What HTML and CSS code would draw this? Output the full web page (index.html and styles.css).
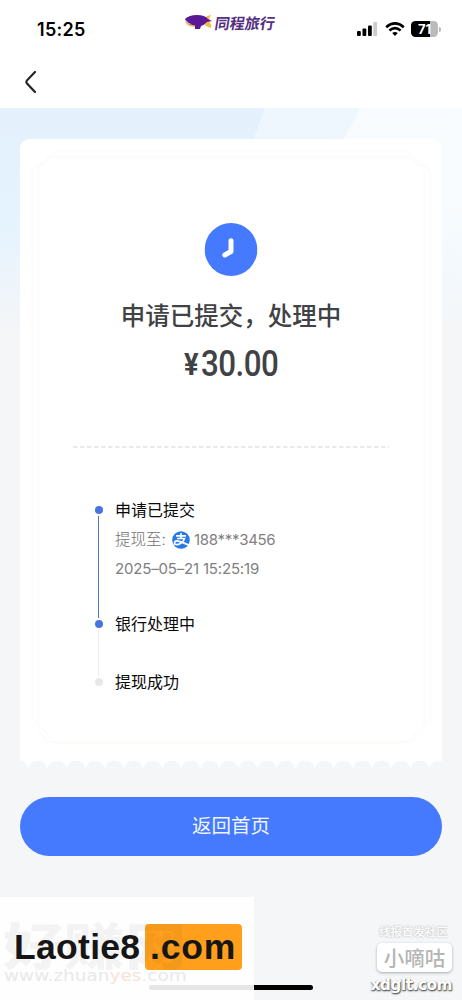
FILE: index.html
```html
<!DOCTYPE html>
<html lang="zh-CN">
<head>
<meta charset="utf-8">
<meta name="viewport" content="width=device-width, initial-scale=1">
<title>提现</title>
<link rel="stylesheet" href="styles.css">
</head>
<body>
<header class="status">
  <span class="time">15:25</span>
  <span class="brand">
    <svg width="29" height="18" viewBox="0 0 29 18"><path d="M19 5 Q24 1 27 1 Q25 4 25 7 Q28 11 27 14 Q22 13 19 9Z" fill="#f3bd45"/><path d="M1 5 Q1 13 10 13 L18 13 L14 11 Q5 11 2 5Z" fill="#f2c565"/><path d="M1 5 Q5 1 13 1 Q21 1 24 5 L28 7 L23 8 Q20 11 17 12 L16 15 H11 V11.5 Q4 11 3 8 L1 5Z" fill="#5a1897"/><path d="M2 6 Q4 9.5 8 10.5 Q4 10.8 2 6Z" fill="#fff"/></svg>
    <span class="brand-name">同程旅行</span>
  </span>
  <span class="signals">
    <svg width="21" height="14" viewBox="0 0 21 14"><rect x="0" y="9" width="3.8" height="5" rx="1"/><rect x="5.5" y="6.5" width="3.8" height="7.5" rx="1"/><rect x="11" y="3.5" width="3.8" height="10.5" rx="1"/><rect x="16.3" y="0" width="3.8" height="14" rx="1" fill="#ccc"/></svg>
    <svg width="20" height="14" viewBox="0 0 20 14"><g fill="none" stroke="#000" stroke-width="2.6"><path d="M1.2 5.2 Q10 -2.4 18.8 5.2"/><path d="M4.4 8.5 Q10 3.8 15.6 8.5"/></g><path d="M7.2 11 Q10 8.8 12.8 11 L10 14Z"/></svg>
    <span class="battery">71</span>
  </span>
</header>
<nav class="nav">
  <svg width="14" height="24" viewBox="0 0 14 24"><path d="M11 2 L2.8 10.6 Q1.8 12 2.8 13.2 L11 22" fill="none" stroke="#222" stroke-width="2.2" stroke-linecap="round"/></svg>
</nav>
<main class="page">
  <svg class="rays" width="462" height="230" viewBox="0 0 462 230">
    <defs><linearGradient id="fade" x1="0" y1="0" x2="0" y2="1"><stop offset=".4" stop-color="#fff"/><stop offset="1" stop-color="#fff" stop-opacity="0"/></linearGradient></defs>
    <path d="M265 0H462V230H180Z" fill="url(#fade)" opacity=".38"/><path d="M360 0H462V230H240Z" fill="url(#fade)" opacity=".6"/>
  </svg>
  <section class="card">
    <svg class="frame" width="422" height="627" viewBox="0 0 422 627" fill="none" stroke="#faf9f6"><path d="M36 12H386L410 32V579L386 604H36L12 579V32Z"/><path d="M32 18H390Q393 24 404 28V591Q398 596 392 603H26Q24 596 18 592V28Q28 24 32 18Z"/></svg>
    <svg class="clock" width="53" height="53" viewBox="0 0 53 53"><circle cx="26.5" cy="26.5" r="26.4" fill="#4579fe"/><path d="M26.5 17.8V28.5L20.3 32" fill="none" stroke="#fff" stroke-width="5" stroke-linecap="round" stroke-linejoin="round"/></svg>
    <h1 class="title">申请已提交，处理中</h1>
    <p class="amount"><span class="yen">¥</span><span class="sum">30.00</span></p>
    <svg class="divider" width="316" height="2" viewBox="0 0 316 2"><path d="M0 1H316" stroke="#e4e4e4" stroke-width="1.4" stroke-dasharray="4.5 2.5"/></svg>
    <ol class="steps">
      <li class="step done">
        <span class="rail"></span>
        <div class="info">
          <h2>申请已提交</h2>
          <p class="account"><span class="to">提现至:</span><svg width="18" height="18" viewBox="0 0 18 18"><circle cx="9" cy="9" r="8.8" fill="#2878e6"/><g fill="none" stroke="#fff" stroke-width="1.7"><path d="M4 4.8H14M9 2.2V7.5M5 7.5H12.5Q11 12.2 5.5 13.6Q2.3 14 2.5 11.7Q3 9.4 6.3 10.1Q9 10.7 17 14.1"/></g></svg><span class="phone">188***3456</span></p>
          <p class="date">2025–05–21 15:25:19</p>
        </div>
      </li>
      <li class="step current">
        <span class="rail"></span>
        <h2>银行处理中</h2>
      </li>
      <li class="step pending">
        <span class="rail"></span>
        <h2>提现成功</h2>
      </li>
    </ol>
    <div class="scallops"></div>
  </section>
  <button class="home">返回首页</button>
</main>
<div class="indicator"></div>
<aside class="mark-left">
  <div class="logo"><span>Laotie8</span><b>.com</b></div>
  <span class="ghost">好赚网</span>
  <span class="ghost-url">www.zhuan<i>yes</i>.com</span>
</aside>
<aside class="mark-right">
  <span class="club">线报首发社区</span>
  <span class="badge">小嘀咕</span>
  <span class="site">xdglt.com</span>
</aside>
</body>
</html>
```
FILE: styles.css
```css
* { box-sizing: border-box; }
body {
  margin: 0;
  height: 1000px;
  position: relative;
  overflow: hidden;
  display: flex;
  flex-direction: column;
  background: #f4f6f9;
  font-family: Inter, "Noto Sans CJK SC", sans-serif;
}
h1, h2, p, ol { margin: 0; padding: 0; font-weight: 400; }
svg { display: block; flex: none; }

.status {
  height: 58px;
  background: #fff;
  display: grid;
  grid-template-columns: 184px 1fr 105px;
  align-items: start;
}
.time { padding: 18px 0 0 37px; font-size: 18px; line-height: 24px; font-weight: 600; letter-spacing: .3px; }
.brand { display: flex; padding-top: 14px; gap: 2px; }
.brand-name {
  font: 700 15px/18px "Noto Sans CJK SC", sans-serif;
  color: #553080;
  transform: skewX(-9deg);
  white-space: nowrap;
}
.signals { display: flex; align-items: center; padding-top: 21px; gap: 7px; }
.battery {
  position: relative;
  width: 27px;
  height: 16px;
  margin-left: -1px;
  border-radius: 4.5px;
  background: linear-gradient(90deg, #000 72%, #bbb 72%);
  color: #fff;
  font-size: 13px;
  line-height: 16px;
  font-weight: 700;
  text-align: center;
}
.battery::after {
  content: "";
  position: absolute;
  left: 28px;
  top: 6px;
  width: 1.5px;
  height: 5px;
  border-radius: 0 2px 2px 0;
  background: #bbb;
}
.nav { height: 50px; background: #fff; padding: 12px 0 0 24px; }

.page {
  flex: 1;
  position: relative;
  padding: 31px 20px 0;
  background: linear-gradient(180deg, #e4f1fd 0, #e4f3fe 110px, #f4f6f8 220px);
}
.rays { position: absolute; left: 0; top: 0; }
.card {
  position: relative;
  height: 629px;
  border-radius: 9px 9px 0 0;
  background: linear-gradient(#fff, #fff) 0 0 / 100% 622px no-repeat;
  display: flex;
  flex-direction: column;
  align-items: center;
}
.frame { position: absolute; left: 0; top: 0; }
.clock { margin-top: 84px; transform: translateX(-.5px); }
.title {
  margin-top: 21px;
  font: 500 24.5px/36px "Noto Sans CJK SC", sans-serif;
  color: #414245;
  white-space: nowrap;
}
.amount {
  width: 96px;
  height: 40px;
  margin-top: 11px;
  display: flex;
  font: 500 36px/40px Roboto, sans-serif;
  color: #414245;
}
.yen { width: 20px; font-size: 32px; font-weight: 700; transform: translateX(1px) scaleX(.85); transform-origin: left; }
.sum { transform: scaleX(.87); transform-origin: left; letter-spacing: -.6px; }
.sum { margin-left: 1px; }
.divider { margin-top: 62px; }

.steps { list-style: none; align-self: stretch; padding: 48.5px 0 0 74px; }
.step { display: flex; gap: 12px; }
.step h2 { font: 400 16px/24px "Noto Sans CJK SC", sans-serif; color: #0a0a0a; }
.rail {
  width: 9px;
  padding-top: 9px;
  display: flex;
  flex-direction: column;
  align-items: center;
}
.rail::before { content: ""; width: 8px; height: 8px; border-radius: 50%; background: #4774df; }
.rail::after { content: ""; flex: 1; width: 1.5px; margin: 2px 0 -7px; background: #5078c8; }
.done { height: 114px; }
.current { height: 58.5px; }
.current .rail::after { background: #ececec; }
.pending .rail::before { background: #e8e8e8; }
.pending .rail::after { display: none; }
.account {
  display: flex;
  align-items: center;
  height: 24px;
  margin-top: 7px;
  font-size: 15px;
  color: #808080;
}
.to { width: 57px; padding-top: 1px; font: 300 15.5px/24px Inter, "Noto Sans CJK SC", sans-serif; color: #707070; white-space: nowrap; }
.phone { margin-left: 4px; font-size: 15px; letter-spacing: -.3px; }
.date { margin-top: 5px; font-size: 15px; line-height: 24px; color: #808080; letter-spacing: -.18px; white-space: nowrap; }
.scallops {
  align-self: stretch;
  height: 8px;
  margin-top: auto;
  background: radial-gradient(circle at 50% 10px, transparent 9px, #fff 9.7px) 8.4px 0 / 19.1px 8px repeat-x;
}
.home {
  display: block;
  width: 100%;
  height: 59px;
  margin-top: 29px;
  padding: 0 0 3px;
  position: relative;
  border: 0;
  border-radius: 30px;
  background: #4579fe;
  color: #eef5ff;
  font: 400 19.5px/56px "Noto Sans CJK SC", sans-serif;
}

.indicator { position: absolute; left: 149px; top: 985px; width: 164px; height: 5px; border-radius: 3px; background: #000; }
.mark-left { position: absolute; left: 0; top: 897px; width: 254px; height: 103px; background: rgba(255,255,255,.9); }
.ghost {
  position: absolute;
  left: 3px;
  top: 13px;
  font: 900 61px/68px "Noto Sans CJK SC", sans-serif;
  color: rgba(60,60,60,.055);
  transform: scaleY(.82);
  white-space: nowrap;
}
.ghost-url { position: absolute; left: 4px; top: 69px; font: 400 15px/20px "DejaVu Sans", sans-serif; color: #e9e9e9; transform: scaleX(1.23); transform-origin: left; white-space: nowrap; }
.ghost-url i { color: #f8e2d9; font-style: normal; }
.logo {
  display: flex;
  align-items: center;
  gap: 4px;
  padding: 27px 0 0 14px;
  font: 700 35.5px/46px "Liberation Sans", Arial, sans-serif;
  letter-spacing: .3px;
  color: #151515;
}
.logo span { width: 127px; }
.logo b { width: 97px; height: 46px; padding-left: 5px; border-radius: 4px; background: #ff9f1b; letter-spacing: .8px; }
.mark-right { position: absolute; right: 10px; top: 923px; width: 84px; display: flex; flex-direction: column; align-items: flex-end; }
.club { font: 700 11.5px/16px "Noto Sans CJK SC", sans-serif; color: #fbfbfb; text-shadow: 0 0 2px #aaa; padding-right: 4px; white-space: nowrap; }
.badge {
  width: 75px;
  height: 29px;
  margin-top: 4px;
  border-radius: 5px;
  background: #fff;
  box-shadow: 0 1px 3px #aaa;
  color: #b5b5b5;
  font: 500 20.5px/29px "Noto Sans CJK SC", sans-serif;
  text-align: center;
}
.site { margin-top: 4px; font: 700 15px/18px "DejaVu Sans", sans-serif; color: #fff; text-shadow: 0 1px 2px #555, 1px 1px 1px #777; letter-spacing: -.3px; }
```
